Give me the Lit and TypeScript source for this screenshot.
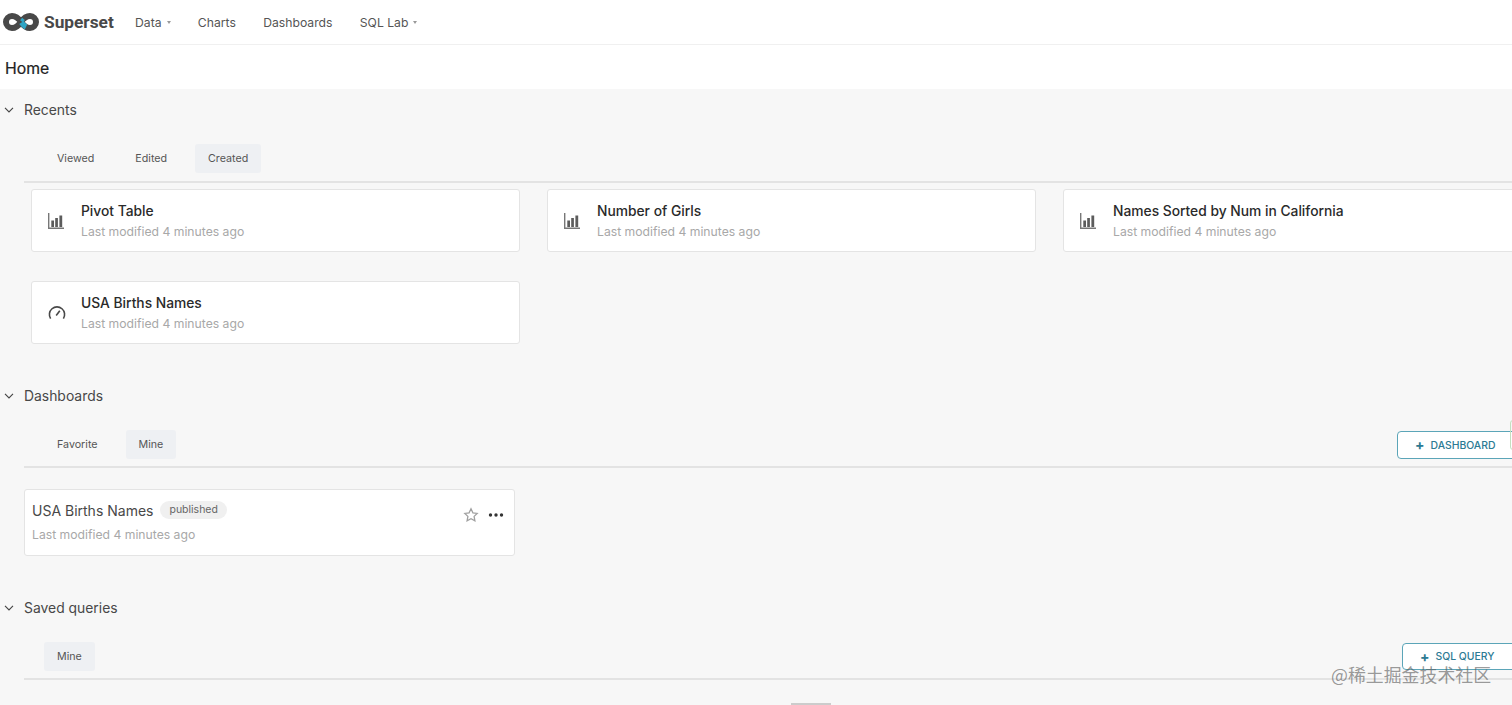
import { LitElement, html, css } from "lit";
import { customElement } from "lit/decorators.js";

const chevron = html`<svg class="chev" viewBox="0 0 10 10" width="10" height="10"><path d="M1 2.800 L5 7 L9 2.800" fill="none" stroke="#444" stroke-width="1.100"/></svg>`;
const barIcon = html`<svg class="ic" viewBox="0 0 16 16" width="16" height="16"><path d="M.7 0V15.200H16" fill="none" stroke="#777" stroke-width="1.400"/><path d="M3.300 7.500h2.700v6.500H3.300zM7.200 5h2.700v9H7.200zM11.400 2.500h2.800v11.500H11.400z" fill="#5c5c5c"/></svg>`;
const gaugeIcon = html`<svg class="ic" viewBox="0 0 18 16" width="18" height="16"><path d="M2.600 13.600A7.600 7.600 0 1 1 15.400 13.600" fill="none" stroke="#484848" stroke-width="1.600"/><path d="M8.200 10.600 L11.800 5.800" fill="none" stroke="#484848" stroke-width="1.600"/></svg>`;

@customElement("app-root")
export class AppRoot extends LitElement {
  static styles = css`
    :host { display: block; width: 1512px; height: 705px; overflow: hidden; position: relative; font-family: Inter, "Noto Sans", sans-serif; color: #333; background: #f7f7f7; }
    .nav { height: 44px; background: #fff; border-bottom: 1px solid #f0f0f0; display: flex; align-items: center; }
    .logo { display: flex; align-items: center; margin-left: 2px; width: 133px; }
    .logo span { font-family: Roboto, sans-serif; font-weight: 700; font-size: 17.300px; color: #484848; margin-left: 4px; }
    .menu { display: flex; font-size: 12.200px; color: #555; }
    .menu a { display: flex; align-items: center; margin-right: 27.300px; }
    .caret { display: inline-block; margin-left: 5px; border: 2px solid transparent; border-top: 3px solid #999; border-bottom: 0; }
    .home { height: 44px; background: #fff; display: flex; align-items: center; padding: 2px 0 0 5px; box-sizing: border-box; font-size: 15.800px; font-weight: 400; color: #222; -webkit-text-stroke: 0.2px #222; }
    .head { height: 42px; display: flex; align-items: center; font-size: 13.900px; color: #484848; }
    .chev { margin: 0 10px 0 4px; }
    .bar { margin: 13px 0 0 24px; height: 36px; border-bottom: 2px solid #e3e3e3; display: flex; padding-left: 20px; }
    .bar.tall { height: 37px; }
    .tab { height: 29px; display: flex; align-items: center; padding: 0 13px; font-size: 10.700px; color: #555; margin-right: 15px; border-radius: 3px; }
    .tab.on { background: #eef0f3; }
    .spacer { flex: 1; }
    .btn { height: 28px; box-sizing: border-box; margin: 1px -20px 0 0; background: #fff; border: 1px solid #5ba5b8; border-radius: 4px; display: flex; align-items: center; gap: 6px; font-size: 10.400px; font-weight: 500; color: #2c7a93; padding-left: 17px; flex: none; }
    .btn b { font-size: 14px; font-weight: 700; line-height: 1; }
    .d { width: 135px; }
    .q { width: 130px; height: 27px; }
    .grid { display: grid; grid-template-columns: repeat(3, 489px); gap: 29px 27px; margin: 6px 0 31px 31px; }
    .card { height: 63px; box-sizing: border-box; background: #fff; border: 1px solid #e4e4e4; border-radius: 3px; display: flex; align-items: center; }
    .icw { width: 49px; display: flex; justify-content: flex-start; padding-left: 16px; box-sizing: border-box; margin-top: 1px; }
    .body { padding-top: 2px; }
    .t { font-size: 13.800px; font-weight: 500; color: #2a2a2a; line-height: 20px; }
    .s { font-size: 12.200px; color: #a8a8a8; line-height: 20px; margin-top: 1px; }
    .dcard { width: 491px; height: 67px; box-sizing: border-box; margin: 21px 0 31px 24px; background: #fff; border: 1px solid #e4e4e4; border-radius: 3px; display: flex; align-items: center; padding: 0 10px 0 7px; }
    .grow { flex: 1; }
    .row { display: flex; align-items: center; gap: 7px; }
    .row .t { font-size: 14px; font-weight: 400; color: #484848; }
    .pill { font-size: 10.500px; color: #666; background: #f0f0f0; border-radius: 10px; padding: 0 9px; height: 18px; display: flex; align-items: center; margin-top: -2px; }
    .sub { margin-top: 4px; }
    .acts { display: flex; align-items: center; gap: 9px; margin-top: -15px; }
    .green { position: absolute; left: 1510px; top: 420px; width: 4px; height: 28px; border: 1px solid #c4dfc0; border-radius: 3px; }
    .stub { position: absolute; left: 791px; top: 703px; width: 40px; height: 2px; background: #ccc; }
    .wm { position: absolute; left: 1331px; top: 663px; font-family: "Noto Sans CJK SC", sans-serif; font-size: 17.900px; line-height: 22px; color: rgba(90,90,90,.62); white-space: nowrap; }
  `;

  private card(title: string, icon: unknown) {
    return html`<div class="card"><div class="icw">${icon}</div><div class="body"><div class="t">${title}</div><div class="s">Last modified 4 minutes ago</div></div></div>`;
  }

  render() {
    return html`
      <div class="nav">
        <div class="logo">
          <svg viewBox="0 0 38 20" width="38" height="20">
            <path d="M19 10C16 5.500 13.500 4 10 4a6 6 0 0 0 0 12c3.500 0 6-1.500 9-6s5.500-6 9-6a6 6 0 0 1 0 12c-3.500 0-6-1.500-9-6z" fill="none" stroke="#484848" stroke-width="6"/>
            <path d="M19.500 10.500 C20.800 12.400 22 14 24 15" fill="none" stroke="#2fa5c4" stroke-width="5.400"/>
            <path d="M19.500 9.300 L21.500 6.800" fill="none" stroke="#2fa5c4" stroke-width="3.500"/>
          </svg>
          <span>Superset</span>
        </div>
        <div class="menu">
          <a>Data<i class="caret"></i></a><a>Charts</a><a>Dashboards</a><a>SQL Lab<i class="caret"></i></a>
        </div>
      </div>
      <div class="home">Home</div>

      <div class="head">${chevron}Recents</div>
      <div class="bar tall">
        <div class="tab">Viewed</div><div class="tab">Edited</div><div class="tab on">Created</div>
      </div>
      <div class="grid">
        ${this.card("Pivot Table", barIcon)}
        ${this.card("Number of Girls", barIcon)}
        ${this.card("Names Sorted by Num in California", barIcon)}
        ${this.card("USA Births Names", gaugeIcon)}
      </div>

      <div class="head">${chevron}Dashboards</div>
      <div class="bar">
        <div class="tab">Favorite</div><div class="tab on">Mine</div>
        <div class="spacer"></div>
        <div class="btn d"><b>+</b>DASHBOARD</div>
      </div>
      <div class="dcard">
        <div class="grow">
          <div class="row"><div class="t">USA Births Names</div><div class="pill">published</div></div>
          <div class="s sub">Last modified 4 minutes ago</div>
        </div>
        <div class="acts">
          <svg viewBox="0 0 16 16" width="16" height="16"><path d="M8 1.800 9.900 5.800 14.200 6.400 11.100 9.400 11.900 13.800 8 11.700 4.100 13.800 4.900 9.400 1.800 6.400 6.100 5.800z" fill="none" stroke="#a0a0a0" stroke-width="1.300"/></svg>
          <svg viewBox="0 0 16 16" width="16" height="16"><circle cx="2.500" cy="8" r="1.700" fill="#333"/><circle cx="8" cy="8" r="1.700" fill="#333"/><circle cx="13.500" cy="8" r="1.700" fill="#333"/></svg>
        </div>
      </div>

      <div class="head">${chevron}Saved queries</div>
      <div class="bar">
        <div class="tab on">Mine</div>
        <div class="spacer"></div>
        <div class="btn q"><b>+</b>SQL QUERY</div>
      </div>

      <div class="green"></div>
      <div class="stub"></div>
      <div class="wm">@稀土掘金技术社区</div>
    `;
  }
}
